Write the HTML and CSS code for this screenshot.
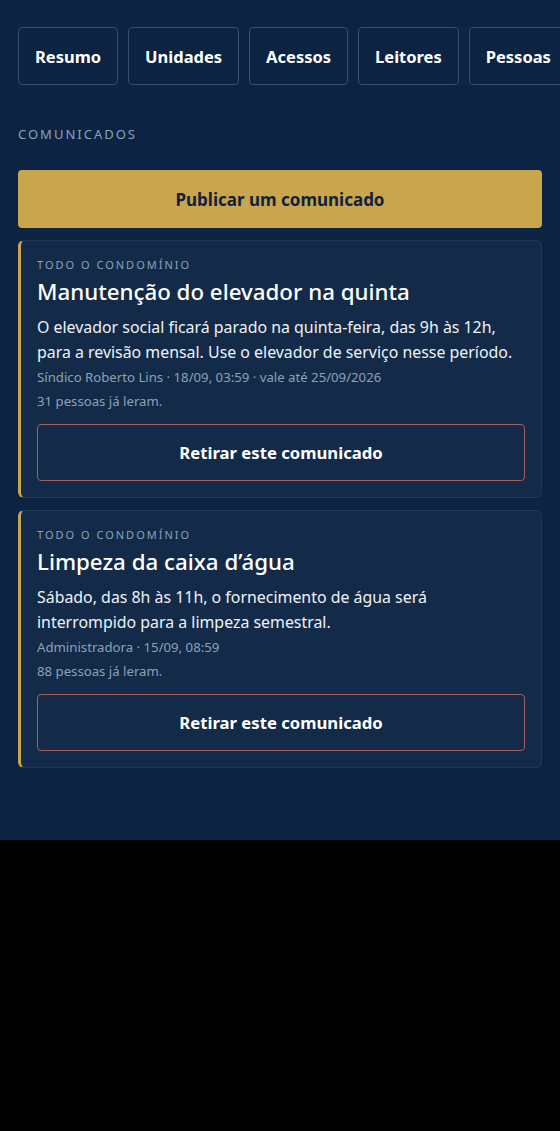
FILE: index.html
```html
<!DOCTYPE html>
<html lang="pt-BR">
<head>
<meta charset="utf-8">
<title>Comunicados</title>
<link rel="stylesheet" href="styles.css">
</head>
<body>
<main class="page">
  <nav class="tabs">
    <button class="tab">Resumo</button>
    <button class="tab">Unidades</button>
    <button class="tab">Acessos</button>
    <button class="tab">Leitores</button>
    <button class="tab">Pessoas</button>
  </nav>

  <h2 class="section-label">COMUNICADOS</h2>

  <button class="publish">Publicar um comunicado</button>

  <article class="notice">
    <div class="audience">TODO O CONDOMÍNIO</div>
    <h3 class="notice-title">Manutenção do elevador na quinta</h3>
    <p class="notice-body">O elevador social ficará parado na quinta-feira, das 9h às 12h, para a revisão mensal. Use o elevador de serviço nesse período.</p>
    <div class="meta">Síndico Roberto Lins · 18/09, 03:59 · vale até 25/09/2026</div>
    <div class="meta">31 pessoas já leram.</div>
    <button class="withdraw">Retirar este comunicado</button>
  </article>

  <article class="notice">
    <div class="audience">TODO O CONDOMÍNIO</div>
    <h3 class="notice-title">Limpeza da caixa d’água</h3>
    <p class="notice-body">Sábado, das 8h às 11h, o fornecimento de água será interrompido para a limpeza semestral.</p>
    <div class="meta">Administradora · 15/09, 08:59</div>
    <div class="meta">88 pessoas já leram.</div>
    <button class="withdraw">Retirar este comunicado</button>
  </article>
</main>
</body>
</html>
```

FILE: styles.css
```css
html {
  background: #000;
}
body {
  margin: 0;
  font-family: "Noto Sans", "Open Sans", sans-serif;
  color: #eef2f7;
}
.page {
  background: #0c2441;
  padding: 27px 18px 72px;
  overflow: hidden;
}
.tabs {
  display: flex;
  gap: 10px;
}
.tab {
  flex: none;
  height: 58px;
  padding: 0 16px;
  background: transparent;
  border: 1px solid #34506f;
  border-radius: 4px;
  color: #ffffff;
  font-family: "Noto Sans", sans-serif;
  font-weight: 700;
  font-size: 16.5px;
}
.section-label {
  margin: 40px 0 0;
  height: 45px;
  font-size: 13px;
  font-weight: 400;
  letter-spacing: 2px;
  color: #8ba2bb;
  line-height: 18px;
}
.publish {
  display: block;
  width: 100%;
  height: 58px;
  background: #c9a64e;
  border: none;
  border-radius: 4px;
  color: #10223c;
  font-family: "Noto Sans", sans-serif;
  font-weight: 700;
  font-size: 17px;
}
.notice {
  margin-top: 12px;
  background: #132b48;
  border: 1px solid #1f3a59;
  border-left: 3px solid #c9a64e;
  border-radius: 6px;
  padding: 16px 16px 16px 16px;
}
.audience {
  font-size: 11px;
  letter-spacing: 2px;
  color: #8ba2bb;
  line-height: 16px;
}
.notice-title {
  margin: 3px 0 0;
  font-size: 22.3px;
  font-weight: 500;
  line-height: 32px;
  color: #ffffff;
}
.notice-body {
  margin: 7px 0 0;
  font-size: 15.9px;
  line-height: 25px;
  color: #eef2f7;
}
.meta {
  font-size: 13.2px;
  line-height: 24px;
  color: #8ea0b6;
}
.withdraw {
  display: block;
  width: 100%;
  height: 57px;
  margin-top: 11px;
  background: transparent;
  border: 1px solid #a0605f;
  border-radius: 4px;
  color: #ffffff;
  font-family: "Noto Sans", sans-serif;
  font-weight: 700;
  font-size: 16.7px;
}
```
